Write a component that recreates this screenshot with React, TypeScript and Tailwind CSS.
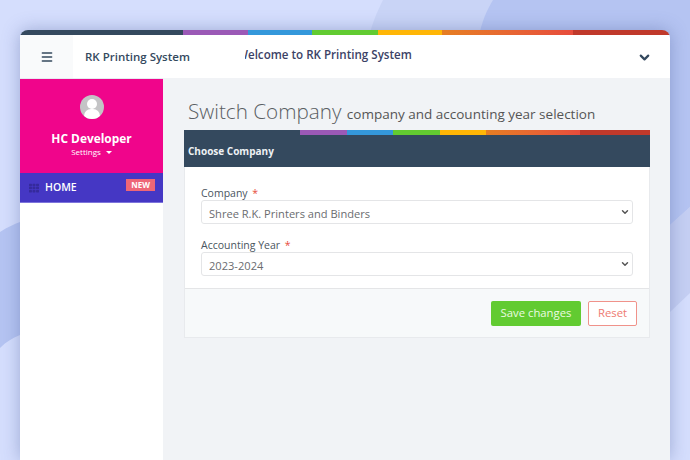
import { Menu, ChevronDown } from 'lucide-react';
import { FaTh } from 'react-icons/fa';

const font = { fontFamily: '"Open Sans", sans-serif' };

function Stripe({ lead }: { lead: string }) {
  return (
    <div className="flex h-[5px] shrink-0">
      <div className={`${lead} bg-[#34495e]`} />
      <div className="flex-[65] bg-[#9b59b6]" />
      <div className="flex-[64] bg-[#3498db]" />
      <div className="flex-[66] bg-[#62cb31]" />
      <div className="flex-[64] bg-[#ffb606]" />
      <div className="flex-[131] bg-gradient-to-r from-[#e67e22] to-[#e74c3c]" />
      <div className="flex-[97] bg-[#c0392b]" />
    </div>
  );
}

function Field({ label, value }: { label: string; value: string }) {
  return (
    <div className="flex flex-col">
      <label className="translate-y-[1px] text-[10.5px] leading-[16px] text-[#4a5560]">
        {label} <span className="ml-[2px] text-[#e74c3c]">*</span>
      </label>
      <div className="relative">
        <select
          defaultValue={value}
          className="block h-[24px] w-full appearance-none rounded-[3px] border border-[#e4e5e7] bg-white pl-[7px] pt-[5px] text-[11.1px] text-[#6a6c6f]"
          style={font}
        >
          <option>{value}</option>
        </select>
        <ChevronDown size={10} strokeWidth={3.5} className="pointer-events-none absolute right-[3px] top-[7px] text-[#555]" />
      </div>
    </div>
  );
}

export default function App() {
  return (
    <div className="relative h-[460px] w-[690px] overflow-hidden bg-[#d5defd]" style={font}>
      {/* background waves */}
      <svg className="absolute inset-0" width="690" height="460" viewBox="0 0 690 460">
        <path d="M383 0 C376 14 372 24 368 40 L368 230 L690 230 L690 0 Z" fill="#c9d4f6" />
        <path d="M493 0 C487 10 482 20 478 40 L478 235 L670 225 L690 207 L690 0 Z" fill="#b5c4f2" />
        <path d="M670 225 L690 207 L690 293 L670 312 Z" fill="#c5cff3" />
        <path d="M0 232 C8 227 14 224 20 222 L20 335 C12 338 6 342 0 348 Z" fill="#b5c4f2" />
      </svg>

      <div className="relative ml-[20px] mt-[30px] flex h-[430px] w-[650px] flex-col overflow-hidden rounded-t-[8px] shadow-[0_0_18px_rgba(70,90,150,0.4)]">
        <Stripe lead="flex-[163]" />

        <header className="flex h-[43px] shrink-0 items-center bg-white">
          <div className="flex h-full w-[53px] items-center justify-center bg-[#f9fafb]">
            <Menu size={14} strokeWidth={2.5} className="mt-[1px] text-[#34495e]" />
          </div>
          <div className="mt-[1px] w-[172px] pl-[12px] text-[11.5px] font-semibold text-[#34495e]">RK Printing System</div>
          <div className="mb-[4px] flex-1 overflow-hidden">
            <div className="-ml-[8px] whitespace-nowrap text-[11.6px] font-semibold text-[#3b4266]">
              Welcome to RK Printing System
            </div>
          </div>
          <ChevronDown size={15} strokeWidth={3.5} className="mr-[18px] mt-[1px] text-[#34495e]" />
        </header>

        <div className="flex min-h-0 flex-1">
          <aside className="w-[143px] shrink-0 border-t border-[#e7e8f3] bg-white">
            <div className="flex h-[94px] flex-col items-center bg-[#f0058b] pt-[16px] text-white">
              <div className="relative h-[24px] w-[24px] overflow-hidden rounded-full bg-[#c4c4c6]">
                <div className="absolute left-[7px] top-[4px] h-[10px] w-[10px] rounded-full bg-white" />
                <div className="absolute left-[4px] top-[14px] h-[14px] w-[16px] rounded-full bg-white" />
              </div>
              <div className="mt-[10px] text-[11.9px] font-bold leading-[18px]">HC Developer</div>
              <div className="mt-[-1px] flex items-center gap-[5px] text-[8px] leading-[12px]">
                Settings
                <span className="h-0 w-0 border-x-[3px] border-t-[3px] border-x-transparent border-t-white" />
              </div>
            </div>
            <div className="flex h-[30px] items-center border-b border-[#7d74dc] bg-[#4537c4] pl-[9px] pr-[8px]">
              <FaTh size={10} className="text-[#352a9c]" />
              <span className="ml-[6px] flex-1 text-[10.5px] font-semibold text-white">HOME</span>
              <span className="mb-[6px] bg-[#ee6677] px-[5px] text-[8px] font-bold leading-[12px] text-white">NEW</span>
            </div>
          </aside>

          <main className="min-w-0 flex-1 bg-[#f1f3f6] pl-[21px] pr-[20px]">
            <h1 className="h-[52px] whitespace-nowrap pl-[4px] pt-[17px] text-[20.7px] font-light leading-[32px] text-[#5a5e63]">
              Switch Company{' '}
              <span className="text-[13.5px] font-normal text-[#555]">company and accounting year selection</span>
            </h1>

            <section className="border border-t-0 border-[#e8eaed]">
              <div className="-mx-px">
                <Stripe lead="flex-[161]" />
              </div>
              <div className="-mx-px flex h-[32px] items-center bg-[#34495e] pl-[4px] text-[10px] font-bold text-[#eef1f4]">
                Choose Company
              </div>
              <div className="flex flex-col gap-[12px] border-b border-[#e4e5e7] bg-white pb-[12px] pl-[16px] pr-[16px] pt-[17px]">
                <Field label="Company" value="Shree R.K. Printers and Binders" />
                <Field label="Accounting Year" value="2023-2024" />
              </div>
              <div className="flex h-[48px] items-center justify-end gap-[7px] bg-[#f7f9fa] pr-[12px]">
                <button className="h-[25px] w-[90px] rounded-[2px] bg-[#62cb31] text-[11.3px] text-[#eafbe0]">
                  Save changes
                </button>
                <button className="h-[25px] w-[49px] rounded-[2px] border border-[#f0928a] bg-white text-[11.3px] text-[#ee7a72]">
                  Reset
                </button>
              </div>
            </section>
          </main>
        </div>
      </div>
    </div>
  );
}
